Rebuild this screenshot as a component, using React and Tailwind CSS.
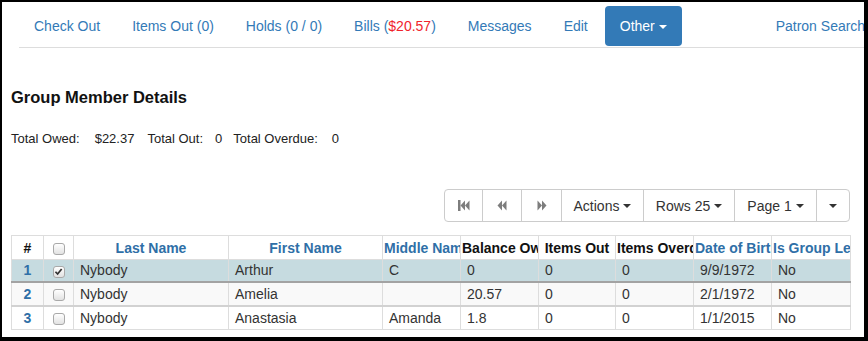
function Caret({ color }) {
  return (
    <span
      className={`inline-block h-0 w-0 border-x-[4px] border-t-[4px] border-x-transparent align-middle ${color}`}
    />
  )
}

function Box({ checked }) {
  return (
    <span className="inline-grid h-[12px] w-[12px] place-items-center rounded-[3px] border border-[#a9a9a9] bg-gradient-to-b from-white to-[#e2e2e2] align-middle">
      {checked && (
        <svg viewBox="0 0 10 10" className="h-[9px] w-[9px]">
          <path d="M1.6 5.3 L4 7.8 L8.5 2.2" stroke="#333" strokeWidth="1.9" fill="none" />
        </svg>
      )}
    </span>
  )
}

function FastBack() {
  return (
    <svg viewBox="0 0 12 11" className="h-[11px] w-[12px]" fill="#7d7d7d">
      <rect x="0" y="0" width="2.5" height="11" />
      <path d="M2.5 5.5 L7 0.5 V10.5 Z" />
      <path d="M7 5.5 L11.5 0.5 V10.5 Z" />
    </svg>
  )
}

function Back() {
  return (
    <svg viewBox="0 0 10 11" className="h-[11px] w-[10px]" fill="#7d7d7d">
      <path d="M0.5 5.5 L5 0.5 V10.5 Z" />
      <path d="M5 5.5 L9.5 0.5 V10.5 Z" />
    </svg>
  )
}

function Fwd() {
  return (
    <svg viewBox="0 0 10 11" className="h-[11px] w-[10px]" fill="#7d7d7d">
      <path d="M9.5 5.5 L5 0.5 V10.5 Z" />
      <path d="M5 5.5 L0.5 0.5 V10.5 Z" />
    </svg>
  )
}

const rows = [
  ['1', true, 'Nybody', 'Arthur', 'C', '0', '0', '0', '9/9/1972', 'No'],
  ['2', false, 'Nybody', 'Amelia', '', '20.57', '0', '0', '2/1/1972', 'No'],
  ['3', false, 'Nybody', 'Anastasia', 'Amanda', '1.8', '0', '0', '1/1/2015', 'No'],
]

const rowStyles = [
  'h-[22px] bg-[#c6dbe0] border-b-2 border-b-[#a3a3a3]',
  'h-[24px] bg-[#f9f9f9] border-b-2 border-b-[#d2d2d2]',
  'h-[24px] bg-white',
]

export default function App() {
  const th = 'overflow-hidden whitespace-nowrap border border-[#ddd] px-[1px] text-center font-bold'
  const td = 'overflow-hidden whitespace-nowrap border-x border-[#ddd] px-[6px]'

  return (
    <div
      className="h-[341px] w-[868px] bg-black pb-[4px] pl-[2px] pr-[4px] pt-[2px] text-[14px] text-[#333]"
      style={{ fontFamily: '"Liberation Sans", Arial, sans-serif' }}
    >
      <div className="h-full w-full overflow-hidden bg-white">
        <nav className="ml-[17px] mt-[4px] flex w-[900px] border-b border-[#ddd] leading-[20px] text-[#337ab7]">
          <a className="mr-[2px] px-[15px] py-[10px]">Check Out</a>
          <a className="mr-[2px] px-[15px] py-[10px]">Items Out (0)</a>
          <a className="mr-[2px] px-[15px] py-[10px]">Holds (0 / 0)</a>
          <a className="mr-[2px] px-[15px] py-[10px]">
            Bills (<span className="text-[#f0242c]">$20.57</span>)
          </a>
          <a className="mr-[2px] px-[15px] py-[10px]">Messages</a>
          <a className="mr-[2px] px-[15px] py-[10px]">Edit</a>
          <a className="mb-[1px] mr-[2px] whitespace-nowrap rounded-[4px] bg-[#337ab7] px-[15px] py-[10px] text-white">
            Other <Caret color="border-t-white" />
          </a>
          <a className="ml-[77px] whitespace-nowrap px-[15px] py-[10px]">Patron Search</a>
        </nav>

        <h4 className="ml-[9px] mt-[39px] text-[16.5px] font-bold leading-[20px] text-[#111]">
          Group Member Details
        </h4>

        <div className="ml-[9px] mt-[23px] flex text-[13px] leading-[18px] text-[#222]">
          <span>Total Owed:</span>
          <span className="ml-[15px]">$22.37</span>
          <span className="ml-[13px]">Total Out:</span>
          <span className="ml-[12px]">0</span>
          <span className="ml-[11px]">Total Overdue:</span>
          <span className="ml-[14px]">0</span>
        </div>

        <div className="mr-[14px] mt-[41px] flex justify-end">
          <div className="flex h-[33px] divide-x divide-[#ccc] rounded-[4px] border border-[#ccc] leading-[20px]">
            <button type="button" className="grid w-[38px] place-items-center">
              <FastBack />
            </button>
            <button type="button" className="grid w-[39px] place-items-center">
              <Back />
            </button>
            <button type="button" className="grid w-[40px] place-items-center">
              <Fwd />
            </button>
            <button type="button" className="flex w-[82px] items-center justify-center gap-[4px]">
              Actions <Caret color="border-t-[#333]" />
            </button>
            <button type="button" className="flex w-[91px] items-center justify-center gap-[4px]">
              Rows 25 <Caret color="border-t-[#333]" />
            </button>
            <button type="button" className="flex w-[82px] items-center justify-center gap-[4px]">
              Page 1 <Caret color="border-t-[#333]" />
            </button>
            <button type="button" className="flex w-[32px] items-center justify-center">
              <Caret color="border-t-[#333]" />
            </button>
          </div>
        </div>

        <table className="ml-[9px] mt-[13px] w-[839px] table-fixed border-collapse border border-[#ddd] leading-[20px]">
          <colgroup>
            <col className="w-[32px]" />
            <col className="w-[30px]" />
            <col className="w-[155px]" />
            <col className="w-[154px]" />
            <col className="w-[78px]" />
            <col className="w-[78px]" />
            <col className="w-[77px]" />
            <col className="w-[78px]" />
            <col className="w-[78px]" />
            <col className="w-[79px]" />
          </colgroup>
          <thead>
            <tr className="h-[24px]">
              <th className={`${th} text-[#111]`}>#</th>
              <th className={th}>
                <Box />
              </th>
              <th className={`${th} text-[#2f6fa7]`}>Last Name</th>
              <th className={`${th} text-[#2f6fa7]`}>First Name</th>
              <th className={`${th} text-[#2f6fa7]`}>Middle Name</th>
              <th className={`${th} text-[#111]`}>Balance Owed</th>
              <th className={`${th} text-[#111]`}>Items Out</th>
              <th className={`${th} text-[#111]`}>Items Overdue</th>
              <th className={`${th} text-[#2f6fa7]`}>Date of Birth</th>
              <th className={`${th} text-[#2f6fa7]`}>Is Group Leader</th>
            </tr>
          </thead>
          <tbody>
            {rows.map((r, i) => (
              <tr key={r[0]} className={rowStyles[i]}>
                <td className={`${td} text-center font-bold text-[#2f6fa7]`}>{r[0]}</td>
                <td className={`${td} text-center`}>
                  <Box checked={r[1]} />
                </td>
                {r.slice(2).map((c, j) => (
                  <td key={j} className={td}>
                    {c}
                  </td>
                ))}
              </tr>
            ))}
          </tbody>
        </table>
      </div>
    </div>
  )
}
